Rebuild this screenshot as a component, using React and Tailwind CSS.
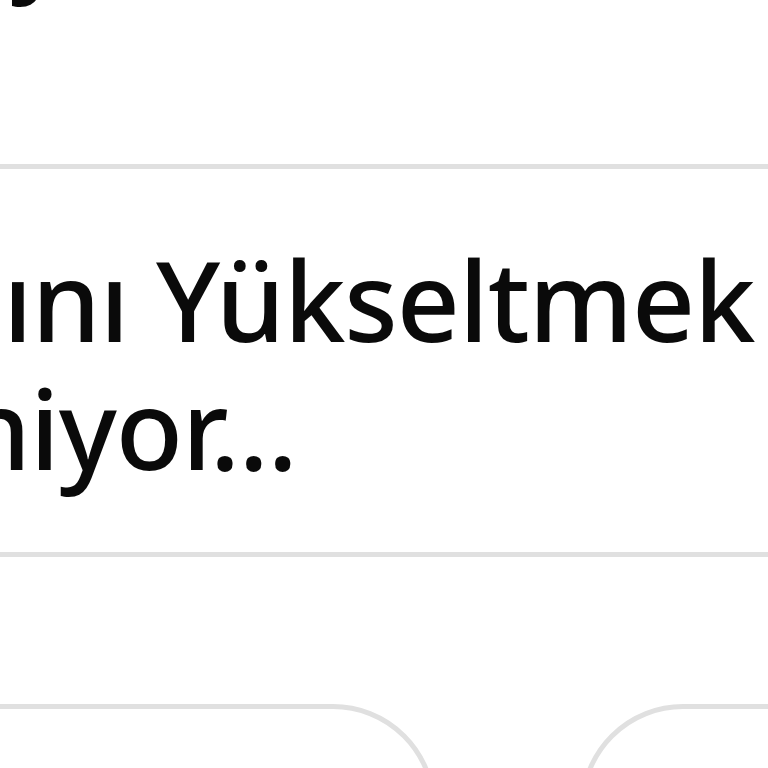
export default function App() {
  const font = { fontFamily: '"Noto Sans", "Open Sans", sans-serif' };
  return (
    <div className="w-[768px] h-[768px] overflow-hidden bg-white text-[#0a0a0a]" style={font}>
      {/* previous card, only the descender is visible */}
      <div className="h-[164px] overflow-hidden">
        <div className="flex -mt-[127px] text-[110px] font-medium leading-[128px] whitespace-nowrap">
          <div className="w-[10px] flex justify-end">
            <span className="invisible">Kola</span>
          </div>
          <span>y</span>
        </div>
      </div>

      <div className="border-y-[5px] border-[#e0e0e0] pt-[66px] pb-[61px]">
        <div className="text-[110px] font-medium leading-[128px] whitespace-nowrap tracking-[-1px]">
          <div className="flex items-baseline">
            <div className="w-[3px] flex justify-end">
              <span>Hesab</span>
            </div>
            <span>ını Yükseltmek</span>
          </div>
          <div className="flex items-baseline">
            <div className="w-[30px] flex justify-end">
              <span>isten</span>
            </div>
            <span>iyor...</span>
          </div>
        </div>
      </div>

      <div className="flex gap-[144px] -ml-[100px] mt-[147px]">
        <div className="w-[536px] h-[220px] shrink-0 rounded-[103px] border-[5px] border-[#e0e0e0]"></div>
        <div className="w-[320px] h-[220px] shrink-0 rounded-[103px] border-[5px] border-[#e0e0e0]"></div>
      </div>
    </div>
  );
}
